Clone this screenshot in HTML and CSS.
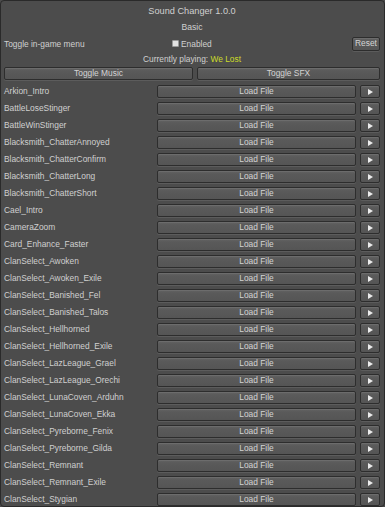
FILE: index.html
```html
<!DOCTYPE html>
<html>
<head>
<meta charset="utf-8">
<link rel="stylesheet" href="styles.css">
</head>
<body>
<div class="panel">
  <div class="title">Sound Changer 1.0.0</div>
  <div class="section">Basic</div>
  <div class="toggle-row">
    <span class="label">Toggle in-game menu</span>
    <span class="check"><span class="box"></span>Enabled</span>
    <span class="btn reset">Reset</span>
  </div>
  <div class="playing">Currently playing: <span class="now">We Lost</span></div>
  <div class="toggles">
    <span class="btn">Toggle Music</span>
    <span class="btn">Toggle SFX</span>
  </div>
  <div class="list">
    <div class="row"><span class="name">Arkion_Intro</span><span class="btn load">Load File</span><span class="btn play"><span class="tri"></span></span></div>
    <div class="row"><span class="name">BattleLoseStinger</span><span class="btn load">Load File</span><span class="btn play"><span class="tri"></span></span></div>
    <div class="row"><span class="name">BattleWinStinger</span><span class="btn load">Load File</span><span class="btn play"><span class="tri"></span></span></div>
    <div class="row"><span class="name">Blacksmith_ChatterAnnoyed</span><span class="btn load">Load File</span><span class="btn play"><span class="tri"></span></span></div>
    <div class="row"><span class="name">Blacksmith_ChatterConfirm</span><span class="btn load">Load File</span><span class="btn play"><span class="tri"></span></span></div>
    <div class="row"><span class="name">Blacksmith_ChatterLong</span><span class="btn load">Load File</span><span class="btn play"><span class="tri"></span></span></div>
    <div class="row"><span class="name">Blacksmith_ChatterShort</span><span class="btn load">Load File</span><span class="btn play"><span class="tri"></span></span></div>
    <div class="row"><span class="name">Cael_Intro</span><span class="btn load">Load File</span><span class="btn play"><span class="tri"></span></span></div>
    <div class="row"><span class="name">CameraZoom</span><span class="btn load">Load File</span><span class="btn play"><span class="tri"></span></span></div>
    <div class="row"><span class="name">Card_Enhance_Faster</span><span class="btn load">Load File</span><span class="btn play"><span class="tri"></span></span></div>
    <div class="row"><span class="name">ClanSelect_Awoken</span><span class="btn load">Load File</span><span class="btn play"><span class="tri"></span></span></div>
    <div class="row"><span class="name">ClanSelect_Awoken_Exile</span><span class="btn load">Load File</span><span class="btn play"><span class="tri"></span></span></div>
    <div class="row"><span class="name">ClanSelect_Banished_Fel</span><span class="btn load">Load File</span><span class="btn play"><span class="tri"></span></span></div>
    <div class="row"><span class="name">ClanSelect_Banished_Talos</span><span class="btn load">Load File</span><span class="btn play"><span class="tri"></span></span></div>
    <div class="row"><span class="name">ClanSelect_Hellhorned</span><span class="btn load">Load File</span><span class="btn play"><span class="tri"></span></span></div>
    <div class="row"><span class="name">ClanSelect_Hellhorned_Exile</span><span class="btn load">Load File</span><span class="btn play"><span class="tri"></span></span></div>
    <div class="row"><span class="name">ClanSelect_LazLeague_Grael</span><span class="btn load">Load File</span><span class="btn play"><span class="tri"></span></span></div>
    <div class="row"><span class="name">ClanSelect_LazLeague_Orechi</span><span class="btn load">Load File</span><span class="btn play"><span class="tri"></span></span></div>
    <div class="row"><span class="name">ClanSelect_LunaCoven_Arduhn</span><span class="btn load">Load File</span><span class="btn play"><span class="tri"></span></span></div>
    <div class="row"><span class="name">ClanSelect_LunaCoven_Ekka</span><span class="btn load">Load File</span><span class="btn play"><span class="tri"></span></span></div>
    <div class="row"><span class="name">ClanSelect_Pyreborne_Fenix</span><span class="btn load">Load File</span><span class="btn play"><span class="tri"></span></span></div>
    <div class="row"><span class="name">ClanSelect_Pyreborne_Gilda</span><span class="btn load">Load File</span><span class="btn play"><span class="tri"></span></span></div>
    <div class="row"><span class="name">ClanSelect_Remnant</span><span class="btn load">Load File</span><span class="btn play"><span class="tri"></span></span></div>
    <div class="row"><span class="name">ClanSelect_Remnant_Exile</span><span class="btn load">Load File</span><span class="btn play"><span class="tri"></span></span></div>
    <div class="row"><span class="name">ClanSelect_Stygian</span><span class="btn load">Load File</span><span class="btn play"><span class="tri"></span></span></div>
  </div>
</div>
</body>
</html>
```

FILE: styles.css
```css
html, body {
  margin: 0;
  padding: 0;
  background: #4c4c4c;
}
body {
  width: 385px;
  height: 507px;
  overflow: hidden;
  font-family: "Liberation Sans", Arial, sans-serif;
  font-size: 8.4px;
  color: #d0d0d0;
}
.panel {
  box-sizing: border-box;
  width: 385px;
  height: 507px;
  border: 1px solid #2a2a2a;
  border-radius: 4px;
  background: #4c4c4c;
  padding: 2px 4px 0 3px;
  overflow: hidden;
}
.title {
  height: 16px;
  line-height: 16px;
  text-align: center;
  font-size: 9.2px;
}
.section {
  height: 16px;
  line-height: 16px;
  text-align: center;
  font-size: 8.6px;
}
.toggle-row {
  height: 17px;
  display: flex;
  align-items: center;
}
.toggle-row .label {
  width: 168px;
}
.check {
  display: flex;
  align-items: center;
  flex: 1;
}
.box {
  width: 5px;
  height: 5px;
  margin-right: 2px;
  background: #e2e2e2;
  border: 1px solid #9a9a9a;
  border-radius: 1px;
}
.playing {
  height: 14px;
  line-height: 14px;
  text-align: center;
}
.now {
  color: #cddc2a;
}
.btn {
  box-sizing: border-box;
  display: flex;
  align-items: center;
  justify-content: center;
  height: 13px;
  border: 1px solid #2d2d2d;
  border-radius: 2px;
  background: linear-gradient(#636363 0, #5a5a5a 3px, #555 100%);
  box-shadow: inset 0 1px 0 #6c6c6c, 0 1px 0 #5c5c5c;
  color: #d4d4d4;
  line-height: 11px;
}
.reset {
  width: 28px;
  height: 14px;
}
.toggles {
  margin-top: 1px;
  display: grid;
  grid-template-columns: 189px 1fr;
  gap: 4px;
}
.list {
  margin-top: 5px;
  display: flex;
  flex-direction: column;
  gap: 4px;
}
.row {
  display: flex;
  align-items: center;
  height: 13px;
}
.name {
  width: 153px;
  line-height: 13px;
  white-space: nowrap;
}
.load {
  width: 199px;
}
.play {
  width: 20px;
  margin-left: 4px;
}
.tri {
  width: 0;
  height: 0;
  border-left: 5px solid #ececec;
  border-top: 3.5px solid transparent;
  border-bottom: 3.5px solid transparent;
}
```
